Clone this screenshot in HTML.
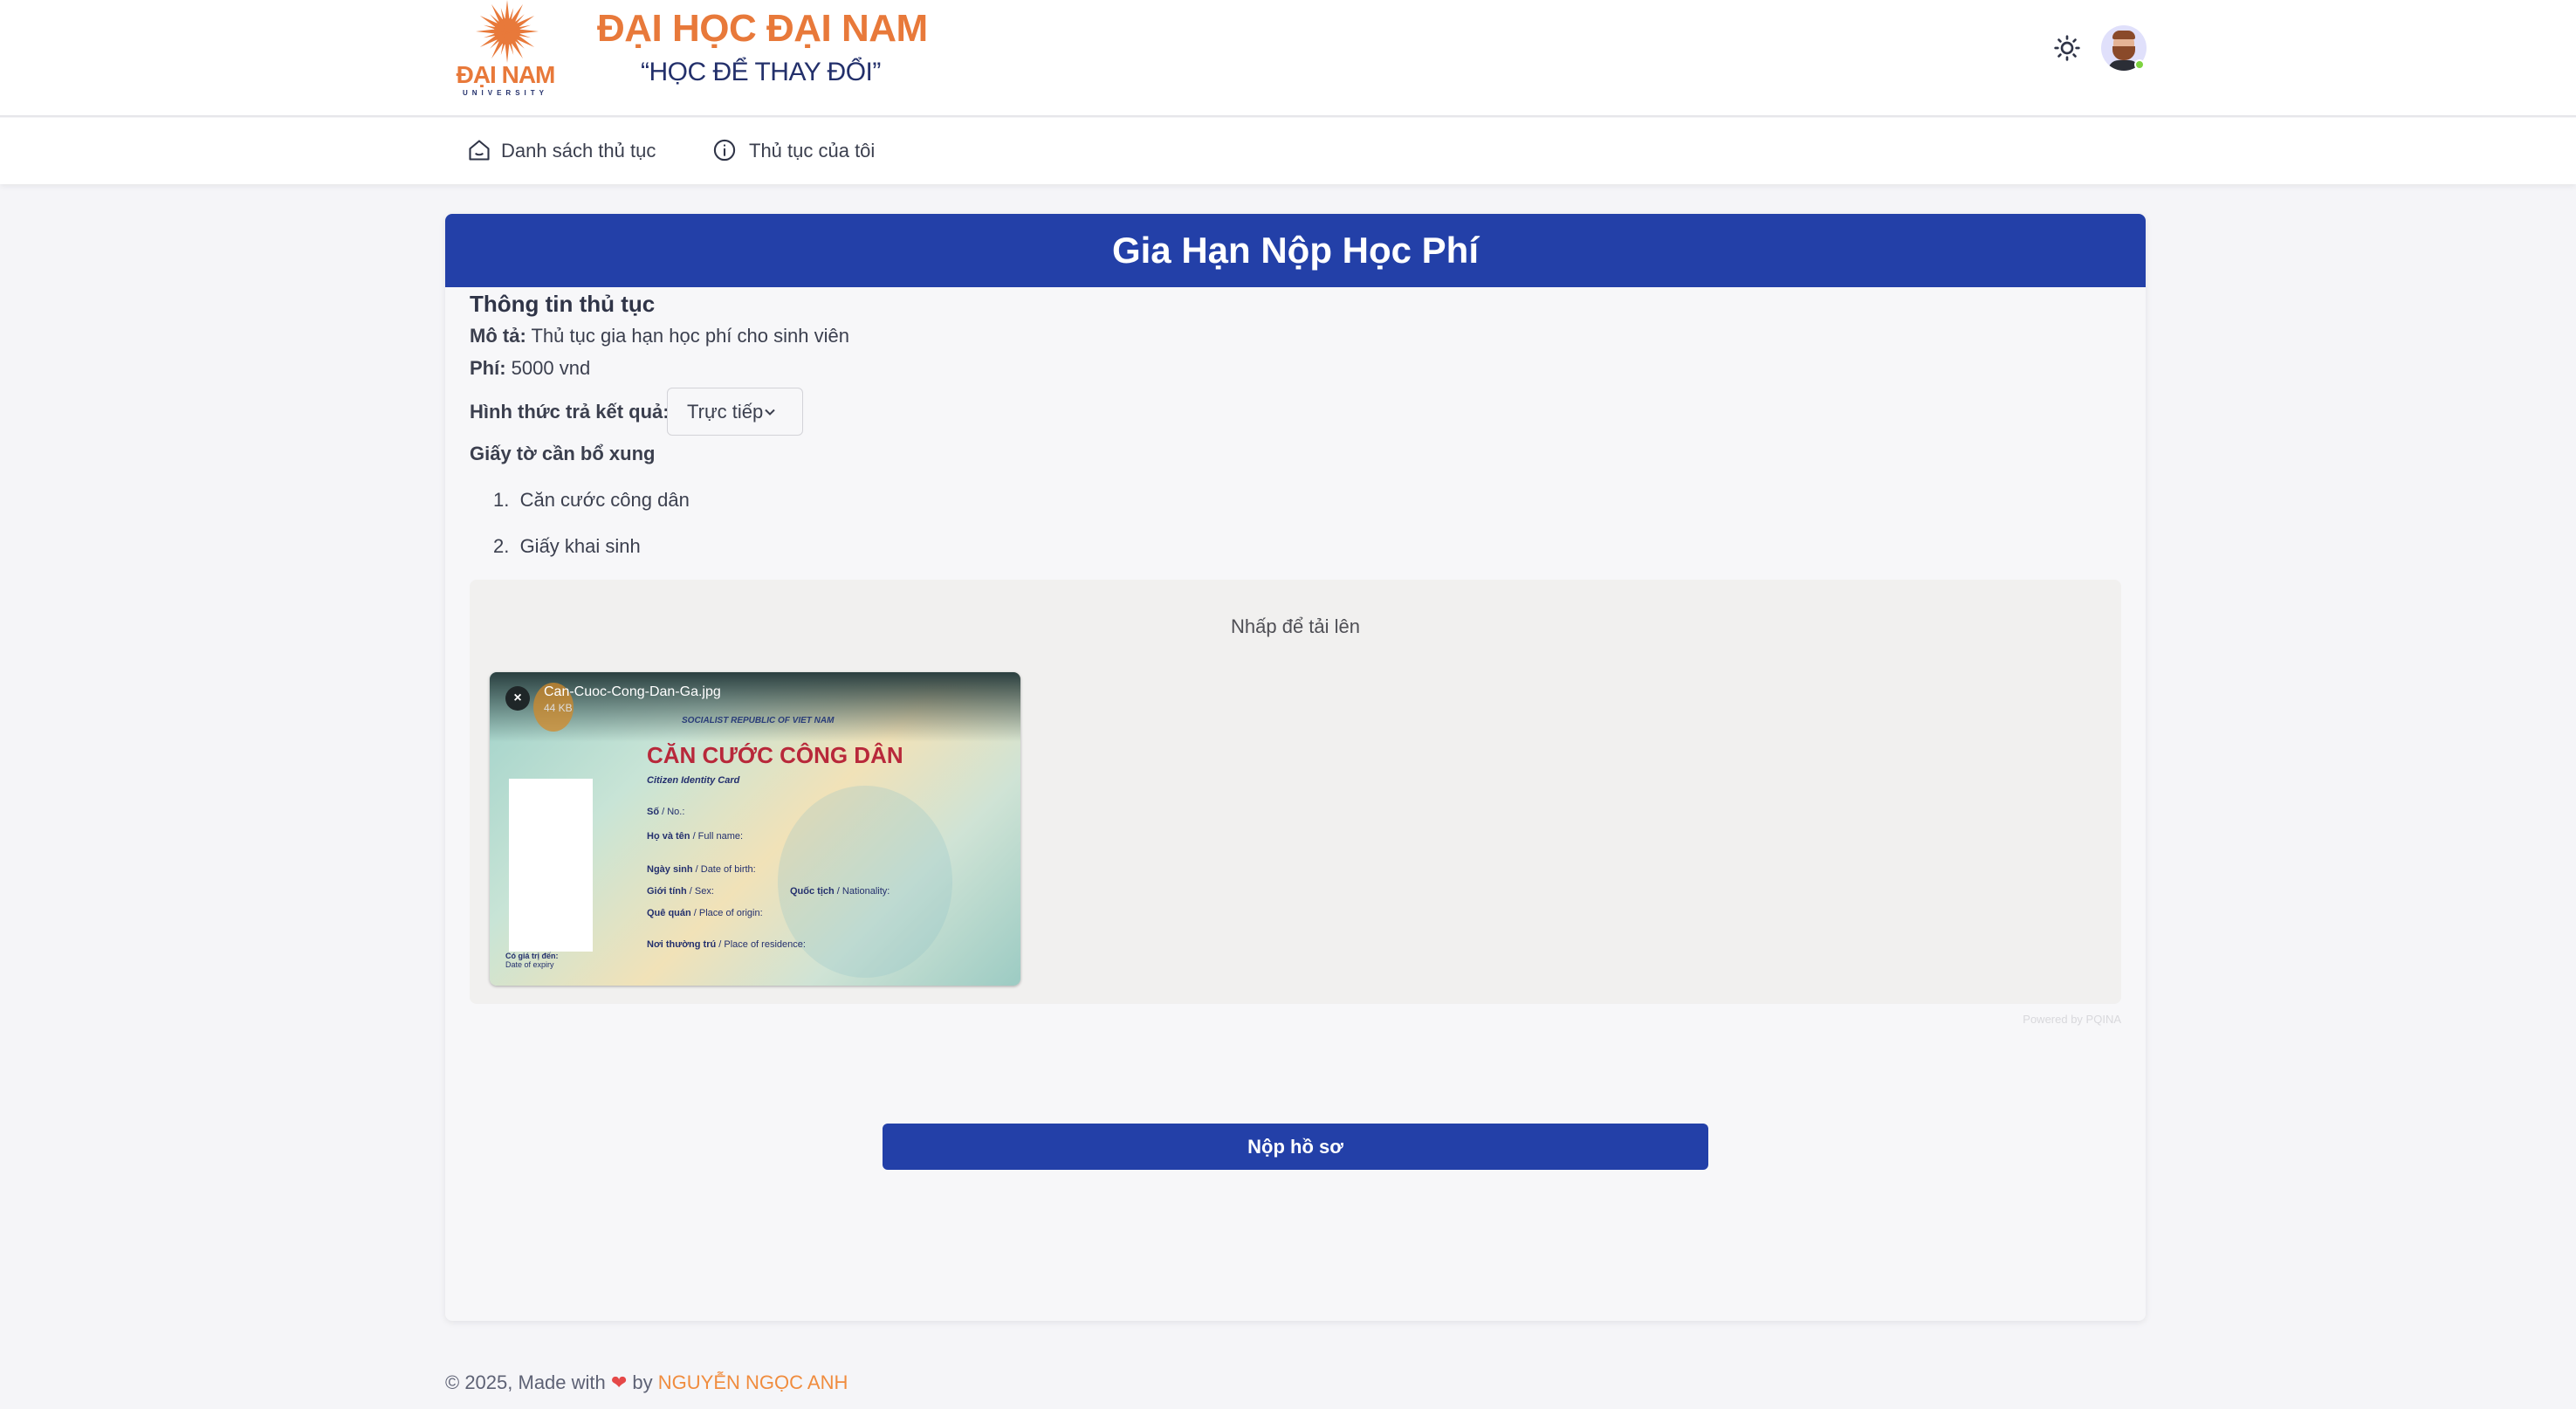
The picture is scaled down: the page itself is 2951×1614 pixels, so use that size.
<!DOCTYPE html>
<html><head><meta charset="utf-8"><style>
*{margin:0;padding:0;box-sizing:border-box}
body{width:2951px;height:1614px;background:#f5f5f8;font-family:"Liberation Sans",sans-serif;color:#3b3f4e;position:relative;overflow:hidden}
.abs{position:absolute}
.hdr{left:0;top:0;width:2951px;height:134px;background:#fff;border-bottom:2px solid #e6e6ea}
.nav{left:0;top:135px;width:2951px;height:76px;background:#fff;box-shadow:0 3px 6px rgba(0,0,0,.06)}
.card{left:510px;top:245px;width:1948px;height:1268px;background:#f7f7f9;border-radius:8px;box-shadow:0 2px 8px rgba(0,0,0,.08)}
.bar{left:510px;top:245px;width:1948px;height:84px;background:#2340a8;border-radius:8px 8px 0 0;color:#fff;font-weight:bold;font-size:42px;text-align:center;line-height:84px}
.t{font-size:22px;white-space:nowrap}
b{font-weight:bold}
.c{position:absolute;left:180px;color:#24306e;font-size:11px;white-space:nowrap}
</style></head><body>
<div class="abs hdr"></div>
<!-- logo -->
<svg class="abs" style="left:536px;top:0" width="90" height="76" viewBox="0 0 90 76">
<g fill="#e8793a" transform="translate(45,36)">
<circle r="15"/>
<polygon points="-4,0 0,-36 4,0"/><polygon points="-4,0 0,-36 4,0" transform="rotate(30)"/><polygon points="-4,0 0,-36 4,0" transform="rotate(60)"/><polygon points="-4,0 0,-36 4,0" transform="rotate(90)"/><polygon points="-4,0 0,-36 4,0" transform="rotate(120)"/><polygon points="-4,0 0,-36 4,0" transform="rotate(150)"/><polygon points="-4,0 0,-36 4,0" transform="rotate(180)"/><polygon points="-4,0 0,-36 4,0" transform="rotate(210)"/><polygon points="-4,0 0,-36 4,0" transform="rotate(240)"/><polygon points="-4,0 0,-36 4,0" transform="rotate(270)"/><polygon points="-4,0 0,-36 4,0" transform="rotate(300)"/><polygon points="-4,0 0,-36 4,0" transform="rotate(330)"/>
<polygon points="-2.5,0 0,-28 2.5,0" transform="rotate(15)"/><polygon points="-2.5,0 0,-28 2.5,0" transform="rotate(45)"/><polygon points="-2.5,0 0,-28 2.5,0" transform="rotate(75)"/><polygon points="-2.5,0 0,-28 2.5,0" transform="rotate(105)"/><polygon points="-2.5,0 0,-28 2.5,0" transform="rotate(135)"/><polygon points="-2.5,0 0,-28 2.5,0" transform="rotate(165)"/><polygon points="-2.5,0 0,-28 2.5,0" transform="rotate(195)"/><polygon points="-2.5,0 0,-28 2.5,0" transform="rotate(225)"/><polygon points="-2.5,0 0,-28 2.5,0" transform="rotate(255)"/><polygon points="-2.5,0 0,-28 2.5,0" transform="rotate(285)"/><polygon points="-2.5,0 0,-28 2.5,0" transform="rotate(315)"/><polygon points="-2.5,0 0,-28 2.5,0" transform="rotate(345)"/>
</g></svg>
<div class="abs" style="left:512px;top:70px;width:134px;text-align:center;color:#e8793a;font-weight:bold;font-size:28px;letter-spacing:-1px">ĐẠI NAM</div>
<div class="abs" style="left:514px;top:102px;width:130px;text-align:center;color:#23306b;font-size:8px;letter-spacing:5px;font-weight:bold">UNIVERSITY</div>
<div class="abs" style="left:684px;top:8px;color:#e8793a;font-weight:bold;font-size:44px;letter-spacing:-0.5px">ĐẠI HỌC ĐẠI NAM</div>
<div class="abs" style="left:734px;top:66px;color:#23306b;font-size:30px;letter-spacing:-0.5px">“HỌC ĐỂ THAY ĐỔI”</div>
<!-- sun -->
<svg class="abs" style="left:2352px;top:39px" width="32" height="32" viewBox="0 0 24 24" fill="none" stroke="#2f3447" stroke-width="2" stroke-linecap="round"><circle cx="12" cy="12" r="4.5"/><path d="M12 2v2M12 20v2M2 12h2M20 12h2M4.9 4.9l1.4 1.4M17.7 17.7l1.4 1.4M4.9 19.1l1.4-1.4M17.7 6.3l1.4-1.4"/></svg>
<!-- avatar -->
<div class="abs" style="left:2407px;top:29px;width:52px;height:52px;border-radius:50%;background:#e0e0fb;overflow:hidden">
<div class="abs" style="left:14px;top:10px;width:24px;height:28px;border-radius:10px;background:#e5b496"></div>
<div class="abs" style="left:13px;top:6px;width:26px;height:10px;border-radius:8px 8px 2px 2px;background:#8a4a2a"></div>
<div class="abs" style="left:13px;top:24px;width:26px;height:16px;border-radius:0 0 12px 12px;background:#8a4a2a"></div>
<div class="abs" style="left:8px;top:40px;width:36px;height:20px;border-radius:12px 12px 0 0;background:#2b2e36"></div>
</div>
<div class="abs" style="left:2445px;top:68px;width:12px;height:12px;border-radius:50%;background:#7ed340;border:2px solid #fff"></div>
<div class="abs nav"></div>
<svg class="abs" style="left:535px;top:158px" width="28" height="28" viewBox="0 0 24 24" fill="none" stroke="#2f3447" stroke-width="1.8" stroke-linejoin="round"><path d="M3 10.5L12 3l9 7.5V21H3z"/><path d="M8.5 15c1 2 6 2 7 0"/></svg>
<div class="abs t" style="left:574px;top:160px;color:#3b3f4e">Danh sách thủ tục</div>
<svg class="abs" style="left:816px;top:158px" width="28" height="28" viewBox="0 0 24 24" fill="none" stroke="#2f3447" stroke-width="1.8"><circle cx="12" cy="12" r="9.5"/><path d="M12 11v6M12 7.2v.3" stroke-linecap="round"/></svg>
<div class="abs t" style="left:858px;top:160px;color:#3b3f4e">Thủ tục của tôi</div>
<div class="abs card"></div>
<div class="abs bar">Gia Hạn Nộp Học Phí</div>
<div class="abs" style="left:538px;top:333px;font-size:26px;font-weight:bold;color:#2f3447">Thông tin thủ tục</div>
<div class="abs t" style="left:538px;top:372px"><b>Mô tả:</b> Thủ tục gia hạn học phí cho sinh viên</div>
<div class="abs t" style="left:538px;top:409px"><b>Phí:</b> 5000 vnd</div>
<div class="abs t" style="left:538px;top:459px"><b>Hình thức trả kết quả:</b></div>
<div class="abs" style="left:764px;top:444px;width:156px;height:55px;border:1.5px solid #d3d3d8;border-radius:6px;background:#f7f7f9"></div>
<div class="abs t" style="left:787px;top:459px">Trực tiếp</div>
<svg class="abs" style="left:874px;top:464px" width="16" height="16" viewBox="0 0 16 16" fill="none" stroke="#3b3f4e" stroke-width="2"><path d="M3 5.5l5 5 5-5"/></svg>
<div class="abs t" style="left:538px;top:507px"><b>Giấy tờ cần bổ xung</b></div>
<div class="abs t" style="left:565px;top:560px">1.&nbsp; Căn cước công dân</div>
<div class="abs t" style="left:565px;top:613px">2.&nbsp; Giấy khai sinh</div>
<div class="abs" style="left:538px;top:664px;width:1892px;height:486px;background:#f1f0ef;border-radius:8px"></div>
<div class="abs t" style="left:538px;top:705px;width:1892px;text-align:center;color:#4f4f55">Nhấp để tải lên</div>
<div class="abs" style="left:1100px;top:1160px;width:1330px;text-align:right;font-size:13px;color:#d8d8dc">Powered by PQINA</div>
<!-- image -->
<div class="abs" style="left:561px;top:770px;width:608px;height:359px;border-radius:8px;overflow:hidden;background:linear-gradient(135deg,#9fd1c9 0%,#c8e4d6 30%,#f1e2b8 55%,#cfe3d5 75%,#9ccbc3 100%);box-shadow:0 1px 3px rgba(0,0,0,.3)">
<div class="abs" style="left:0;top:0;width:608px;height:80px;background:linear-gradient(#2a3f3f,rgba(60,90,90,0))"></div>
<div class="abs" style="left:330px;top:130px;width:200px;height:220px;border-radius:50%;background:rgba(140,190,200,.25)"></div>
<div class="abs" style="left:50px;top:12px;width:46px;height:56px;border-radius:50%;background:#d28a2a;opacity:.75"></div>
<div class="abs" style="left:22px;top:122px;width:96px;height:198px;background:#fff"></div>
<div class="abs" style="left:18px;top:16px;width:28px;height:28px;border-radius:50%;background:#1f2628;color:#fff;font-size:16px;font-weight:bold;text-align:center;line-height:28px">×</div>
<div class="abs" style="left:62px;top:14px;color:#fff;font-size:16px">Can-Cuoc-Cong-Dan-Ga.jpg</div>
<div class="abs" style="left:62px;top:34px;color:#ddd;font-size:12px">44 KB</div>
<div class="abs" style="left:220px;top:50px;color:#2a3d78;font-size:10px;font-weight:bold;font-style:italic">SOCIALIST REPUBLIC OF VIET NAM</div>
<div class="abs" style="left:180px;top:80px;color:#b8283a;font-size:26px;font-weight:bold">CĂN CƯỚC CÔNG DÂN</div>
<div class="c" style="top:118px;font-weight:bold;font-style:italic">Citizen Identity Card</div>
<div class="c" style="top:154px"><b>Số</b> / No.:</div>
<div class="c" style="top:182px"><b>Họ và tên</b> / Full name:</div>
<div class="c" style="top:220px"><b>Ngày sinh</b> / Date of birth:</div>
<div class="c" style="top:245px"><b>Giới tính</b> / Sex:</div>
<div class="c" style="top:245px;left:344px"><b>Quốc tịch</b> / Nationality:</div>
<div class="c" style="top:270px"><b>Quê quán</b> / Place of origin:</div>
<div class="c" style="top:306px"><b>Nơi thường trú</b> / Place of residence:</div>
<div class="abs" style="left:18px;top:320px;color:#24306e;font-size:9px"><b>Có giá trị đến:</b><br>Date of expiry</div>
</div>
<div class="abs" style="left:1011px;top:1287px;width:946px;height:53px;background:#2340a8;border-radius:6px;color:#fff;font-size:22px;font-weight:bold;text-align:center;line-height:53px">Nộp hồ sơ</div>
<div class="abs t" style="left:510px;top:1571px;color:#5e6275">© 2025, Made with <span style="color:#e54848">❤</span> by <span style="color:#f08c3e">NGUYỄN NGỌC ANH</span></div>
</body></html>
